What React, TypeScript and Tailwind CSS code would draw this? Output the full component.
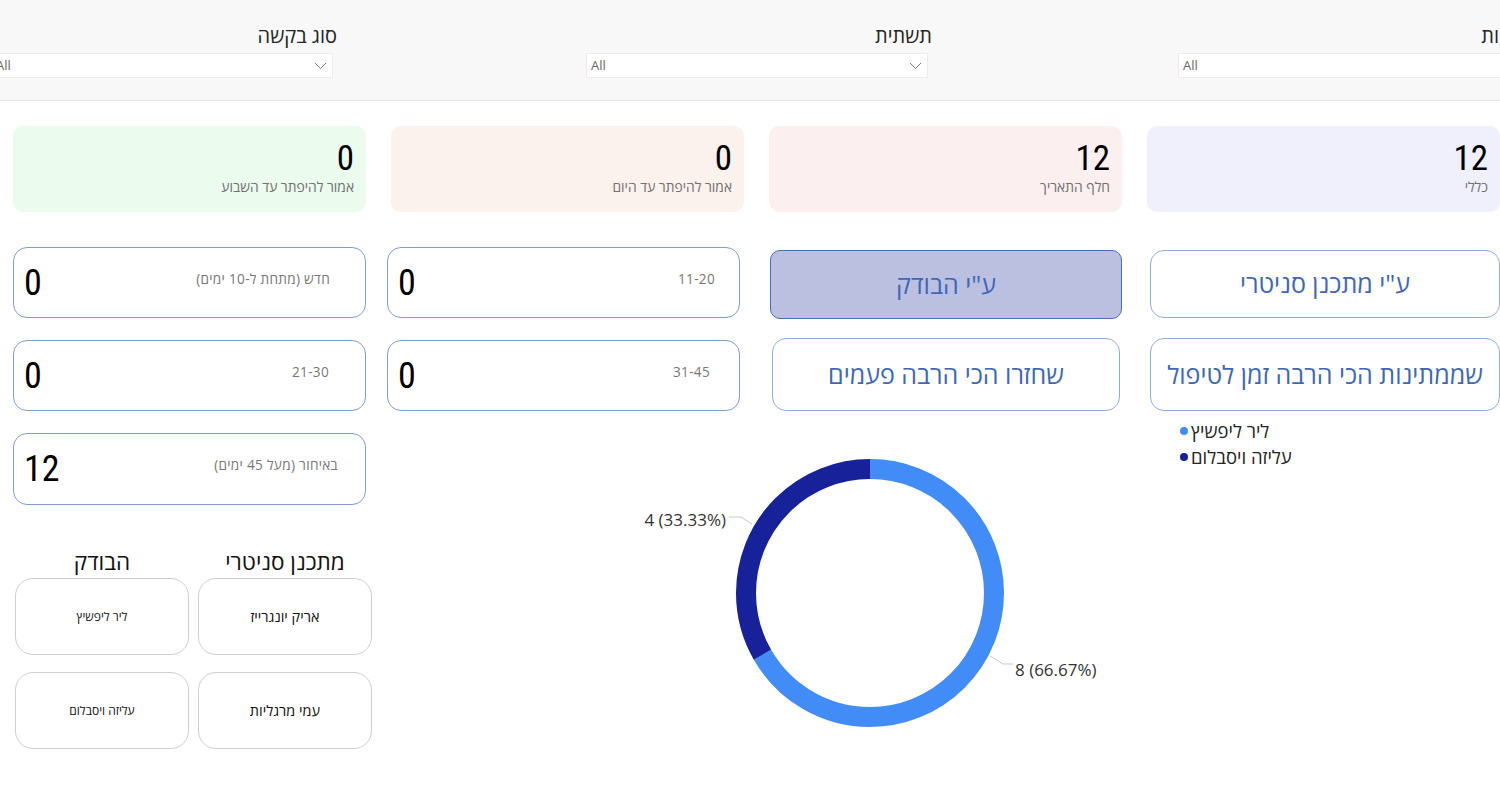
import React from "react";

const HEB = "font-['Open_Sans','Liberation_Sans','DejaVu_Sans',sans-serif]";
const NUM = "font-['Liberation_Sans_Narrow','Roboto_Condensed',Roboto,sans-serif]";

function Chevron() {
  return (
    <svg width="13" height="8" viewBox="0 0 13 8" fill="none">
      <path d="M1 1 L6.5 6.5 L12 1" stroke="#7a7a7a" strokeWidth="1" />
    </svg>
  );
}

function Filter({ title, cls, tcls }: { title: string; cls: string; tcls: string }) {
  return (
    <div className={`w-[342px] shrink-0 ${cls}`}>
      <div dir="rtl" className={`${HEB} text-[20px] leading-[24px] text-[#252423] ${tcls}`}>
        {title}
      </div>
      <div className="mt-[5px] h-[25px] bg-white border border-[#ececec] flex items-center justify-between pl-[4px] pr-[5px]">
        <span className={`${HEB} text-[13px] text-[#666666]`}>All</span>
        <Chevron />
      </div>
    </div>
  );
}

function Kpi({ value, label, bg }: { value: string; label: string; bg: string }) {
  return (
    <div className={`h-[86px] rounded-[10px] ${bg} flex flex-col items-end pr-[12px] pt-[14px]`}>
      <div className={`${NUM} text-[35px] leading-[38px] text-black`}>{value}</div>
      <div dir="rtl" className={`${HEB} text-[13.8px] leading-[18px] text-[#707070]`}>
        {label}
      </div>
    </div>
  );
}

function Bucket({
  value,
  label,
  h,
  pr,
}: {
  value: string;
  label: string;
  h: string;
  pr: string;
}) {
  return (
    <div
      className={`${h} rounded-[14px] border border-[#7d9dd6] bg-white flex items-center justify-between pl-[10px] ${pr}`}
    >
      <span className={`${NUM} text-[36px] leading-none text-black`}>{value}</span>
      <span dir="rtl" className={`${HEB} text-[13.6px] tracking-[0.3px] text-[#777777] mb-[7px]`}>
        {label}
      </span>
    </div>
  );
}

function NavButton({ text, cls }: { text: string; cls: string }) {
  return (
    <div className={`flex items-center justify-center ${cls}`}>
      <span dir="rtl" className={`${HEB} text-[25px] text-[#3d68b8]`}>
        {text}
      </span>
    </div>
  );
}

function NameCard({ name, size }: { name: string; size: string }) {
  return (
    <div className="h-[77px] rounded-[18px] border border-[#cfcfcf] bg-white flex items-center justify-center">
      <span dir="rtl" className={`${HEB} ${size} text-[#111111]`}>
        {name}
      </span>
    </div>
  );
}

function Donut() {
  const r = 124;
  const c = 2 * Math.PI * r;
  const blue = c * (2 / 3);
  const dark = c / 3;
  return (
    <svg width="500" height="300" viewBox="0 0 500 300">
      <g transform="rotate(-90 250 150)">
        <circle
          cx="250"
          cy="150"
          r={r}
          fill="none"
          stroke="#418cf7"
          strokeWidth="20"
          strokeDasharray={`${blue} ${c}`}
        />
        <circle
          cx="250"
          cy="150"
          r={r}
          fill="none"
          stroke="#17229a"
          strokeWidth="20"
          strokeDasharray={`${dark} ${c}`}
          strokeDashoffset={-blue}
        />
      </g>
      <polyline points="109,74 121,74 132,81" fill="none" stroke="#c8c8c8" strokeWidth="1" />
      <polyline points="370,213 383,221 393,221" fill="none" stroke="#c8c8c8" strokeWidth="1" />
      <text
        x="106"
        y="83"
        textAnchor="end"
        fontSize="17"
        fill="#333333"
        fontFamily="'Open Sans','Liberation Sans',sans-serif"
      >
        4 (33.33%)
      </text>
      <text
        x="395"
        y="233"
        textAnchor="start"
        fontSize="17"
        fill="#333333"
        fontFamily="'Open Sans','Liberation Sans',sans-serif"
      >
        8 (66.67%)
      </text>
    </svg>
  );
}

function LegendItem({ color, text }: { color: string; text: string }) {
  return (
    <div className="h-[26px] flex items-center gap-[3px]">
      <span className={`w-[8px] h-[8px] rounded-full ${color}`} />
      <span dir="rtl" className={`${HEB} text-[18.5px] text-[#252423]`}>
        {text}
      </span>
    </div>
  );
}

export default function App() {
  return (
    <div className="w-[1500px] h-[790px] overflow-hidden bg-white">
      <div className="box-border h-[101px] bg-[#f8f8f8] border-b border-[#e6e6e6] flex items-start pt-[24px]">
        <Filter title="סוג בקשה" cls="ml-[-9px]" tcls="mr-[-4px]" />
        <Filter title="תשתית" cls="ml-[253px]" tcls="mr-[-4px]" />
        <Filter title="רשויות" cls="ml-[250px]" tcls="mr-[-13px]" />
      </div>

      <div className="flex pl-[13px] pt-[25px] gap-[25px]">
        {/* Column 1 */}
        <div className="w-[353px] shrink-0">
          <Kpi value="0" label="אמור להיפתר עד השבוע" bg="bg-[#ebfbee]" />
          <div className="mt-[35px] flex flex-col gap-[22px]">
            <Bucket value="0" label="חדש (מתחת ל-10 ימים)" h="h-[71px]" pr="pr-[35px]" />
            <Bucket value="0" label="21-30" h="h-[71px]" pr="pr-[36px]" />
            <Bucket value="12" label="באיחור (מעל 45 ימים)" h="h-[72px]" pr="pr-[27px]" />
          </div>
          <div className="ml-[2px] w-[357px] mt-[44px] grid grid-cols-2 gap-x-[9px]">
            <div dir="rtl" className={`${HEB} text-[22.5px] leading-[26px] text-[#111111] text-center`}>
              הבודק
            </div>
            <div dir="rtl" className={`${HEB} text-[22.5px] leading-[26px] text-[#111111] text-center`}>
              מתכנן סניטרי
            </div>
          </div>
          <div className="ml-[2px] w-[357px] mt-[3px] grid grid-cols-2 gap-x-[9px] gap-y-[17px]">
            <NameCard name="ליר ליפשיץ" size="text-[12px]" />
            <NameCard name="אריק יונגרייז" size="text-[14.5px]" />
            <NameCard name="עליזה ויסבלום" size="text-[12px]" />
            <NameCard name="עמי מרגליות" size="text-[14.5px]" />
          </div>
        </div>

        {/* Right region */}
        <div className="w-[1109px] shrink-0">
          <div className="grid grid-cols-3 gap-[25px]">
            <Kpi value="0" label="אמור להיפתר עד היום" bg="bg-[#fbf2ed]" />
            <Kpi value="12" label="חלף התאריך" bg="bg-[#fbefef]" />
            <Kpi value="12" label="כללי" bg="bg-[#f0f0fd]" />
          </div>

          <div className="mt-[35px] flex items-start">
            <div className="w-[353px] shrink-0 ml-[-4px] flex flex-col gap-[22px]">
              <Bucket value="0" label="11-20" h="h-[71px]" pr="pr-[24px]" />
              <Bucket value="0" label="31-45" h="h-[71px]" pr="pr-[29px]" />
            </div>
            <div className="w-[352px] shrink-0 ml-[30px] mt-[3px] flex flex-col">
              <NavButton
                text={'ע"י הבודק'}
                cls="h-[69px] rounded-[10px] bg-[#bcc0e0] border border-[#4470c0]"
              />
              <NavButton
                text="שחזרו הכי הרבה פעמים"
                cls="mt-[19px] mx-[2px] h-[73px] rounded-[14px] bg-white border border-[#8eaede]"
              />
            </div>
            <div className="w-[350px] shrink-0 ml-[28px] mt-[3px] flex flex-col">
              <NavButton
                text={'ע"י מתכנן סניטרי'}
                cls="h-[68px] rounded-[14px] bg-white border border-[#8eaede]"
              />
              <NavButton
                text="שממתינות הכי הרבה זמן לטיפול"
                cls="mt-[20px] h-[73px] rounded-[14px] bg-white border border-[#8eaede]"
              />
            </div>
          </div>

          <div className="flex items-start">
            <div className="ml-[229px] mt-[32px] shrink-0">
              <Donut />
            </div>
            <div className="ml-[60px] mt-[7px] flex flex-col">
              <LegendItem color="bg-[#418cf7]" text="ליר ליפשיץ" />
              <LegendItem color="bg-[#17229a]" text="עליזה ויסבלום" />
            </div>
          </div>
        </div>
      </div>
    </div>
  );
}
